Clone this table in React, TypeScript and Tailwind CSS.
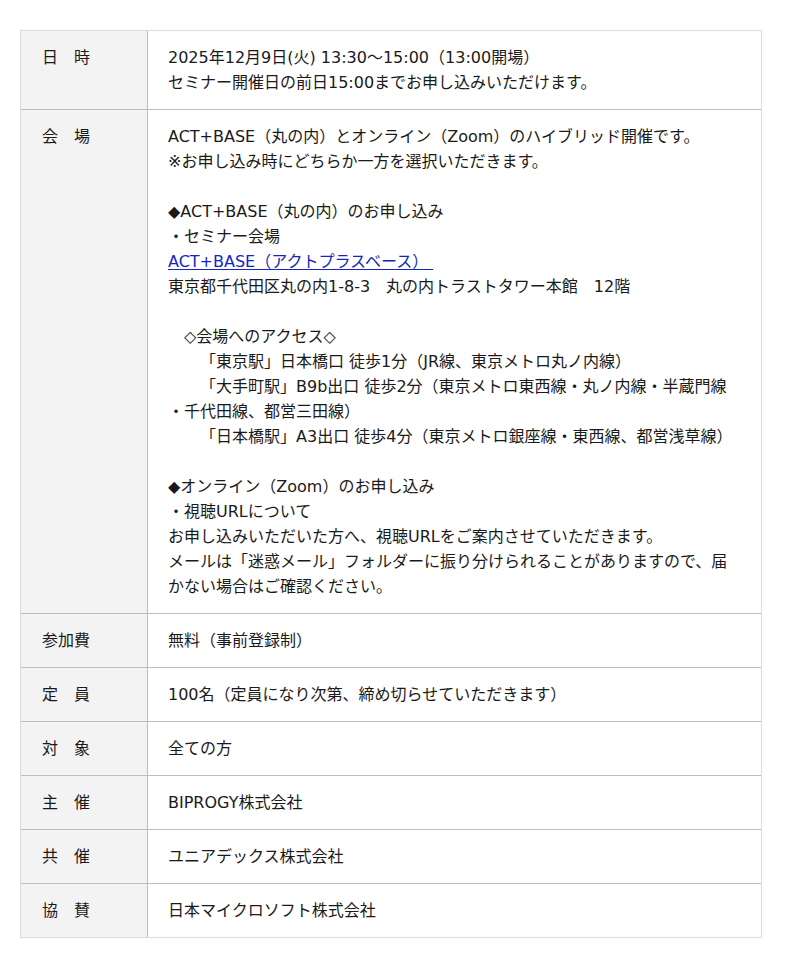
import React from 'react';

type Row = { label: string; content: React.ReactNode };

const Indent = () => <span className="inline-block w-[32px]" />;

const rows: Row[] = [
  {
    label: '日　時',
    content: (
      <>
        <p>2025年12月9日(火) 13:30～15:00（13:00開場）</p>
        <p>セミナー開催日の前日15:00までお申し込みいただけます。</p>
      </>
    ),
  },
  {
    label: '会　場',
    content: (
      <>
        <p>ACT+BASE（丸の内）とオンライン（Zoom）のハイブリッド開催です。</p>
        <p>※お申し込み時にどちらか一方を選択いただきます。</p>
        <p>&nbsp;</p>
        <p>◆ACT+BASE（丸の内）のお申し込み</p>
        <p>・セミナー会場</p>
        <p>
          <a href="#" className="text-[#1226c0] underline underline-offset-2">
            ACT+BASE（アクトプラスベース）&nbsp;
          </a>
        </p>
        <p>東京都千代田区丸の内1-8-3　丸の内トラストタワー本館　12階</p>
        <p>&nbsp;</p>
        <p>　◇会場へのアクセス◇</p>
        <p>
          <Indent />「東京駅」日本橋口 徒歩1分（JR線、東京メトロ丸ノ内線）
        </p>
        <p>
          <Indent />「大手町駅」B9b出口 徒歩2分（東京メトロ東西線・丸ノ内線・半蔵門線
          <br />
          ・千代田線、都営三田線）
        </p>
        <p>
          <Indent />「日本橋駅」A3出口 徒歩4分（東京メトロ銀座線・東西線、都営浅草線）
        </p>
        <p>&nbsp;</p>
        <p>◆オンライン（Zoom）のお申し込み</p>
        <p>・視聴URLについて</p>
        <p>お申し込みいただいた方へ、視聴URLをご案内させていただきます。</p>
        <p>メールは「迷惑メール」フォルダーに振り分けられることがありますので、届かない場合はご確認ください。</p>
      </>
    ),
  },
  { label: '参加費', content: <p>無料（事前登録制）</p> },
  { label: '定　員', content: <p>100名（定員になり次第、締め切らせていただきます）</p> },
  { label: '対　象', content: <p>全ての方</p> },
  { label: '主　催', content: <p>BIPROGY株式会社</p> },
  { label: '共　催', content: <p>ユニアデックス株式会社</p> },
  { label: '協　賛', content: <p>日本マイクロソフト株式会社</p> },
];

const App = () => {
  return (
    <div className="min-h-screen bg-white pl-[20px] pt-[30px] pb-[30px] font-['DejaVu_Sans','Noto_Sans_CJK_JP',sans-serif] text-[16px] leading-[25px] text-[#1a1a1a]">
      <div className="w-[742px] border border-[#dcdcdc]">
        {rows.map((row, idx) => (
          <div
            key={idx}
            className={`flex ${idx === 0 ? '' : 'border-t border-[#bdbdbd]'}`}
          >
            <div className="w-[127px] shrink-0 border-r border-[#bdbdbd] bg-[#f3f3f3] py-[14px] pl-[21px]">
              {row.label}
            </div>
            <div className="flex-1 py-[14px] pl-[20px] pr-[20px]">{row.content}</div>
          </div>
        ))}
      </div>
    </div>
  );
};

export default App;
